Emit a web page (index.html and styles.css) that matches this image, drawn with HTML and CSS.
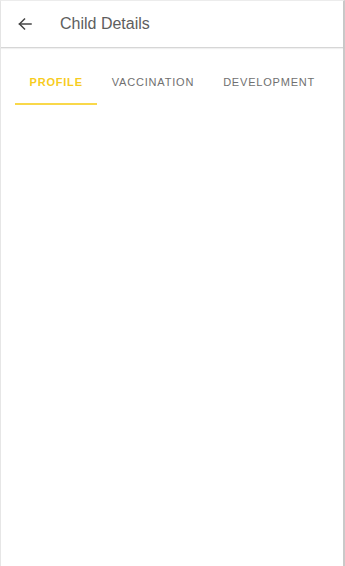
FILE: index.html
```html
<!DOCTYPE html>
<html>
<head>
<meta charset="utf-8">
<link rel="stylesheet" href="styles.css">
</head>
<body>
<div class="frame">
  <header class="appbar">
    <svg class="back" width="16" height="16" viewBox="0 0 16 16" fill="none" stroke="#444" stroke-width="1.5" stroke-linecap="square">
      <path d="M14 8H2.5"/>
      <path d="M7.5 3L2.5 8L7.5 13"/>
    </svg>
    <h1 class="title">Child Details</h1>
  </header>
  <nav class="tabs">
    <div class="tab active">PROFILE</div>
    <div class="tab">VACCINATION</div>
    <div class="tab">DEVELOPMENT</div>
  </nav>
  <main class="content"></main>
</div>
</body>
</html>
```
FILE: styles.css
```css
html, body {
  margin: 0;
  padding: 0;
  height: 100%;
  background: #fff;
}
.frame {
  box-sizing: border-box;
  height: 566px;
  border-left: 1px solid #e6e6e6;
  border-right: 2px solid #c9c9c9;
  border-top: 1px solid #ececec;
  font-family: "Liberation Sans", Arial, sans-serif;
  display: flex;
  flex-direction: column;
}
.appbar {
  height: 46px;
  display: flex;
  align-items: center;
  border-bottom: 1px solid #d6d6d6;
  box-shadow: 0 1px 1px rgba(0,0,0,0.06);
  padding-left: 16px;
}
.back {
  display: block;
}
.title {
  margin: 0 0 0 27px;
  font-size: 16px;
  font-weight: 400;
  color: #5e5e5e;
}
.tabs {
  display: flex;
  padding: 25px 0 0 14px;
}
.tab {
  padding: 3px 14.5px 15px;
  font-size: 11px;
  letter-spacing: 0.8px;
  color: #707070;
  border-bottom: 2px solid transparent;
}
.tab.active {
  color: #f7cc1e;
  font-weight: 700;
  border-bottom-color: #f9d84a;
}
.content {
  flex: 1;
}
```
